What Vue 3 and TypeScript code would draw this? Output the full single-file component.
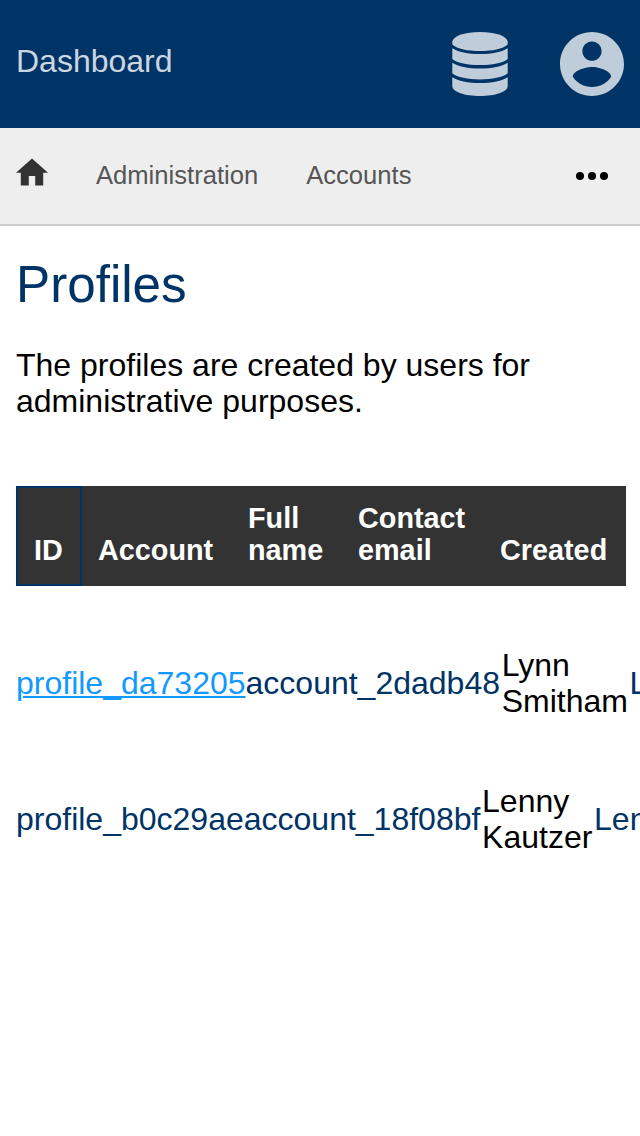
<script setup lang="ts">
interface Profile { id: string; account: string; first: string; last: string; email: string; active: boolean }
const profiles: Profile[] = [
  { id: 'profile_da73205', account: 'account_2dadb48', first: 'Lynn', last: 'Smitham', email: 'Lynn', active: true },
  { id: 'profile_b0c29ae', account: 'account_18f08bf', first: 'Lenny', last: 'Kautzer', email: 'Lenny', active: false },
]
</script>

<template>
  <div class="page">
    <header class="top">
      <span class="brand">Dashboard</span>
      <svg class="db" width="56" height="64" viewBox="0 0 56 64" fill="currentColor">
        <path d="M.3 9.500C2 3.500 13 0 28 0s26 3.500 27.700 9.500v3C51 17 40 19 28 19S5 17 .3 12.500z" />
        <path d="M.3 16.200C6 20 16 22 28 22s22-2 27.700-5.800V27C51 31 40 33 28 33S5 31 .3 27z" />
        <path d="M.3 30.700C6 34.500 16 36.500 28 36.500s22-2 27.700-5.800v10.600C51 45.300 40 47.500 28 47.500S5 45.300.3 41.300z" />
        <path d="M.3 45.200C6 49 16 51 28 51s22-2 27.700-5.800V54C55.700 60 43 64 28 64S.3 60 .3 54z" />
      </svg>
      <svg width="64" height="64" viewBox="2 2 20 20"><path fill="currentColor" d="M12 2C6.480 2 2 6.480 2 12s4.480 10 10 10 10-4.480 10-10S17.520 2 12 2zm0 3c1.660 0 3 1.340 3 3s-1.340 3-3 3-3-1.340-3-3 1.340-3 3-3zm0 14.200c-2.500 0-4.710-1.280-6-3.220.03-1.990 4-3.080 6-3.080 1.990 0 5.970 1.090 6 3.080-1.290 1.940-3.500 3.220-6 3.220z" /></svg>
    </header>
    <nav class="nav">
      <svg class="home" width="32" height="28" viewBox="2 3 20 17"><path fill="currentColor" d="M10 20v-6h4v6h5v-8h3L12 3 2 12h3v8z"/></svg>
      <span>Administration</span>
      <span>Accounts</span>
      <svg class="more" width="32" height="8" viewBox="0 0 32 8"><circle cx="4" cy="4" r="4"/><circle cx="16" cy="4" r="4"/><circle cx="28" cy="4" r="4"/></svg>
    </nav>
    <main>
      <h1>Profiles</h1>
      <p>The profiles are created by users for administrative purposes.</p>
      <div class="head">
        <div class="sel">ID</div><div>Account</div><div>Full<br>name</div><div>Contact<br>email</div><div>Created</div>
      </div>
      <div v-for="p in profiles" :key="p.id" class="row">
        <a :class="{ active: p.active }">{{ p.id }}</a><a>{{ p.account }}</a><span>{{ p.first }}<br>{{ p.last }}</span><a>{{ p.email }}</a>
      </div>
    </main>
  </div>
</template>

<style>
body { margin: 0; background: #fff; }
</style>
<style scoped>
.page { width: 640px; height: 1136px; overflow: hidden; font: 32px/36px "Liberation Sans", Arial, sans-serif; color: #000; }
.top { height: 128px; box-sizing: border-box; padding: 0 16px; display: flex; align-items: center; background: #003366; color: #bfccd9; }
.brand { margin-right: auto; padding-bottom: 6px; color: #ccd6e0; }
.db { margin-right: 52px; }
.nav { height: 98px; box-sizing: border-box; border-bottom: 2px solid #ccc; background: #eee; padding: 0 32px 0 16px; display: flex; align-items: center; gap: 48px; font-size: 25.6px; color: #555; }
.nav span { margin-top: -2px; }
.home { color: #333; margin-top: -7.5px; }
.more { margin-left: auto; fill: #000; }
main { padding: 0 14px 0 16px; }
h1 { margin: 30px 0 33px; font-size: 51.2px; line-height: 58px; font-weight: 400; color: #003366; }
p { margin: 0 0 67px; }
.head { height: 100px; display: grid; grid-template-columns: 66px 150px 110px 142px 142px; background: #333; color: #fff; font-weight: 700; font-size: 28.8px; line-height: 32px; margin-bottom: 29px; }
.head div { box-sizing: border-box; padding: 0 16px 20px; display: flex; align-items: flex-end; }
.head .sel { border: 2px solid #003366; padding-bottom: 18px; }
.row { height: 136px; display: flex; align-items: center; white-space: nowrap; }
.row span { margin: 0 1.7px; }
.row a { color: #003366; }
.row a.active { color: #1199ff; text-decoration: underline; text-decoration-thickness: 2px; text-underline-offset: 2px; }
</style>
